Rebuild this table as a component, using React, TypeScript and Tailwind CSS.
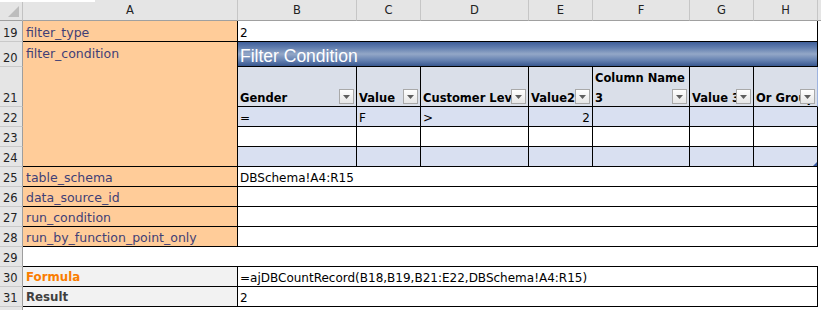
import React from "react";

const dv = "font-['DejaVu_Sans',sans-serif]";
const cols = ["A", "B", "C", "D", "E", "F", "G", "H"];

// small filter button shown in each table header cell
function Drop() {
  return (
    <span className="absolute right-[2px] bottom-[2px] flex h-[15px] w-[15px] items-center justify-center border border-[#a9a9a9] bg-linear-to-b from-white to-[#e6e6e6]">
      <svg width="7" height="4" viewBox="0 0 7 4">
        <path d="M0 0h7L3.5 4z" fill="#5e5e5e" />
      </svg>
    </span>
  );
}

function RowNum({ n }: { n: number }) {
  return (
    <div className={`${dv} flex items-end overflow-hidden border-r border-b border-r-[#9e9e9e] border-b-[#c9c9c9] bg-[#e5e5e5] pb-[2px] pl-[3px] text-[11.5px] leading-none text-[#222]`}>
      {n}
    </div>
  );
}

function Tail() {
  return <div className="bg-white" />;
}

function Label({ text }: { text: string }) {
  return (
    <div className={`${dv} flex items-end border-r border-b border-black bg-[#ffcc99] pb-[2px] pl-[3px] text-[12.5px] leading-none whitespace-nowrap text-[#3f3f76]`}>
      {text}
    </div>
  );
}

function Wide({ text }: { text?: string }) {
  return (
    <div className={`${dv} col-span-7 flex items-end border-r border-b border-black bg-white pb-[2px] pl-[2px] text-[12px] leading-none whitespace-nowrap text-black`}>
      {text}
    </div>
  );
}

function Head({ text, className = "" }: { text: string; className?: string }) {
  return (
    <div className={`${dv} relative flex items-end overflow-hidden border-r border-b border-black bg-[#dadfe9] pb-[2px] pl-[2px] text-[11.5px] leading-none font-bold whitespace-nowrap text-black ${className}`}>
      {text}
      <Drop />
    </div>
  );
}

function Body({ band, text, right, children }: { band: boolean; text?: string; right?: boolean; children?: React.ReactNode }) {
  return (
    <div
      className={`${dv} relative flex items-end border-r border-b border-black pb-[2px] text-[12px] leading-none text-black ${
        band ? "bg-[#d9e0f1]" : "bg-white"
      } ${right ? "justify-end pr-[2px]" : "pl-[2px]"}`}
    >
      {text}
      {children}
    </div>
  );
}

export default function App() {
  const rows22 = ["=", "F", ">", "2", "", "", ""];
  return (
    <div className="relative h-[310px] w-[821px] overflow-hidden bg-white">
      <div className="grid h-full grid-cols-[23px_215px_119px_64px_108px_64px_97px_64px_64px_1fr] grid-rows-[21px_21px_25px_40px_repeat(10,20px)_1fr]">
        {/* column headers */}
        <div className="relative border-r border-b border-r-[#c2c2c2] border-b-[#a0a0a0] bg-[#e5e5e5]">
          <svg className="absolute right-[3px] bottom-[3px]" width="11" height="11" viewBox="0 0 11 11">
            <path d="M11 0v11H0z" fill="#bdbdbd" />
          </svg>
        </div>
        {cols.map((c) => (
          <div
            key={c}
            className={`${dv} flex items-center justify-center border-r border-b border-r-[#c6c6c6] border-b-[#a0a0a0] bg-[#e5e5e5] pt-[1px] text-[11.5px] text-[#222]`}
          >
            {c}
          </div>
        ))}
        <div className="border-b border-b-[#a0a0a0] bg-[#e5e5e5]" />

        {/* 19 */}
        <RowNum n={19} />
        <Label text="filter_type" />
        <Wide text="2" />
        <Tail />

        {/* 20: label spans the whole filter table */}
        <RowNum n={20} />
        <div className={`${dv} row-span-5 border-r border-b border-black bg-[#ffcc99] pt-[6px] pl-[3px] text-[12.5px] leading-none text-[#3f3f76]`}>
          filter_condition
        </div>
        <div className="col-span-7 flex items-end border-r border-b border-black bg-[linear-gradient(to_bottom,#3f5f9a_0%,#6480b0_25%,#93a7c7_50%,#6783b2_75%,#38578f_100%)] pb-[1px] pl-[2px] font-['Liberation_Sans',sans-serif] text-[17.5px] leading-none text-white">
          Filter Condition
        </div>
        <Tail />

        {/* 21: table header */}
        <RowNum n={21} />
        <Head text="Gender" />
        <Head text="Value" />
        <Head text="Customer Level" />
        <Head text="Value2" />
        <div className={`${dv} relative flex flex-col justify-end gap-[8.5px] overflow-hidden border-r border-b border-black bg-[#dadfe9] pb-[2px] pl-[2px] text-[11.5px] leading-none font-bold whitespace-nowrap text-black`}>
          <span>Column Name</span>
          <span>3</span>
          <Drop />
        </div>
        <Head text="Value 3" />
        <Head text="Or Group" className="border-r-[#9db3df]" />
        <Tail />

        {/* 22-24: table body */}
        <RowNum n={22} />
        {rows22.map((t, i) => (
          <Body key={i} band text={t} right={i === 3} />
        ))}
        <Tail />

        <RowNum n={23} />
        {rows22.map((_, i) => (
          <Body key={i} band={false} />
        ))}
        <Tail />

        <RowNum n={24} />
        {rows22.map((_, i) => (
          <Body key={i} band>
            {i === 6 && (
              <svg className="absolute right-0 bottom-0" width="4" height="4" viewBox="0 0 4 4">
                <path d="M4 0v4H0z" fill="#3b5aa0" />
              </svg>
            )}
          </Body>
        ))}
        <Tail />

        {/* 25-28 */}
        <RowNum n={25} />
        <Label text="table_schema" />
        <Wide text="DBSchema!A4:R15" />
        <Tail />

        <RowNum n={26} />
        <Label text="data_source_id" />
        <Wide />
        <Tail />

        <RowNum n={27} />
        <Label text="run_condition" />
        <Wide />
        <Tail />

        <RowNum n={28} />
        <Label text="run_by_function_point_only" />
        <Wide />
        <Tail />

        {/* 29: empty */}
        <RowNum n={29} />
        <div className="col-span-8 border-b border-black bg-white" />
        <Tail />

        {/* 30-31: formula and result */}
        <RowNum n={30} />
        <div className={`${dv} flex items-end border-r border-b border-black bg-[#f2f2f2] pb-[2px] pl-[3px] text-[11.8px] leading-none font-bold text-[#fa7d00]`}>
          Formula
        </div>
        <Wide text="=ajDBCountRecord(B18,B19,B21:E22,DBSchema!A4:R15)" />
        <Tail />

        <RowNum n={31} />
        <div className={`${dv} flex items-end border-r border-b border-black bg-[#f2f2f2] pb-[2px] pl-[3px] text-[11.8px] leading-none font-bold text-[#3f3f3f]`}>
          Result
        </div>
        <Wide text="2" />
        <Tail />

        <div className="border-r border-r-[#9e9e9e] bg-[#e5e5e5]" />
        <div className="col-span-9 bg-white" />
      </div>
      <div className="absolute top-0 left-0 h-[2px] w-[95px] bg-white" />
    </div>
  );
}
